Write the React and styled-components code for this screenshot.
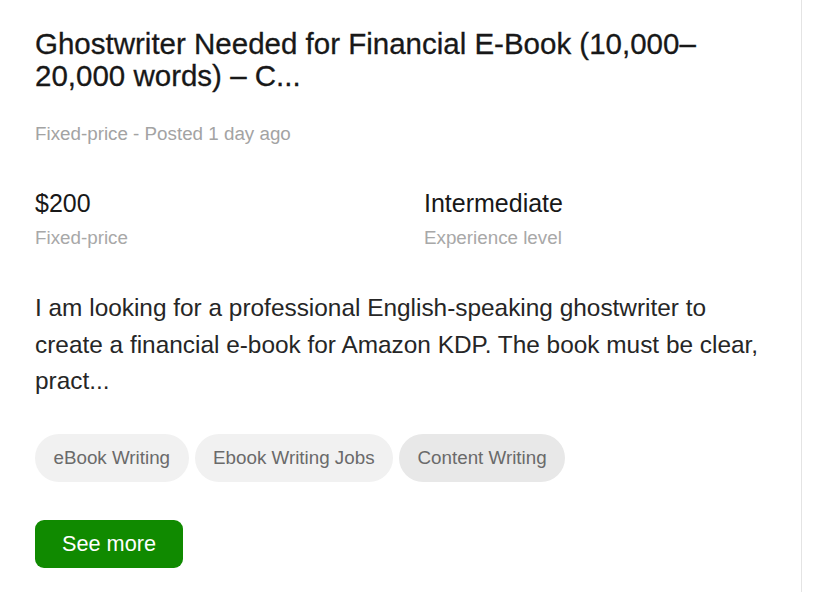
import React from 'react';
import styled, { createGlobalStyle } from 'styled-components';

const GlobalStyle = createGlobalStyle`
  body {
    margin: 0;
    background: #ffffff;
    font-family: "Liberation Sans", Arial, sans-serif;
  }
`;

const Page = styled.div`
  display: flex;
  height: 592px;
  overflow: hidden;
`;

const Card = styled.div`
  width: 802px;
  box-sizing: border-box;
  padding: 28px 25px 0 35px;
  border-right: 1px solid #e4e4e4;
`;

const Title = styled.h2`
  margin: 0;
  max-width: 700px;
  font-size: 29.5px;
  font-weight: 400;
  line-height: 32px;
  color: #181818;
  -webkit-text-stroke: 0.3px #181818;
`;

const Meta = styled.div`
  margin-top: 31px;
  font-size: 18.8px;
  color: #a3a3a3;
`;

const Stats = styled.div`
  display: grid;
  grid-template-columns: 389px 1fr;
  margin-top: 44px;
`;

const Stat = styled.div`
  display: flex;
  flex-direction: column;
  gap: 9px;
`;

const StatValue = styled.div`
  font-size: 25px;
  color: #181818;
`;

const StatLabel = styled.div`
  font-size: 18.8px;
  color: #a8a8a8;
`;

const Description = styled.p`
  margin: 41px 0 0;
  font-size: 24.4px;
  line-height: 36.7px;
  color: #262626;
`;

const Tags = styled.div`
  display: flex;
  gap: 6px;
  margin-top: 34px;
`;

const Tag = styled.span`
  display: inline-flex;
  align-items: center;
  height: 48px;
  padding: 0 18.5px;
  border-radius: 24px;
  font-size: 18.8px;
  color: #6a6a6a;
  background: ${p => (p.$active ? '#e8e8e8' : '#f1f1f1')};
`;

const SeeMore = styled.button`
  display: block;
  margin-top: 38px;
  height: 48px;
  padding: 0 27px;
  border: none;
  border-radius: 9px;
  background: #108a00;
  color: #ffffff;
  font-family: inherit;
  font-size: 21.7px;
`;

const tags = ['eBook Writing', 'Ebook Writing Jobs', 'Content Writing'];

export default function App() {
  return (
    <Page>
      <GlobalStyle />
      <Card>
        <Title>Ghostwriter Needed for Financial E-Book (10,000–20,000 words) – C...</Title>
        <Meta>Fixed-price - Posted 1 day ago</Meta>
        <Stats>
          <Stat>
            <StatValue>$200</StatValue>
            <StatLabel>Fixed-price</StatLabel>
          </Stat>
          <Stat>
            <StatValue>Intermediate</StatValue>
            <StatLabel>Experience level</StatLabel>
          </Stat>
        </Stats>
        <Description>
          I am looking for a professional English-speaking ghostwriter to create a financial e-book for
          Amazon KDP. The book must be clear, pract...
        </Description>
        <Tags>
          {tags.map((t, i) => (
            <Tag key={t} $active={i === 2}>{t}</Tag>
          ))}
        </Tags>
        <SeeMore>See more</SeeMore>
      </Card>
    </Page>
  );
}
